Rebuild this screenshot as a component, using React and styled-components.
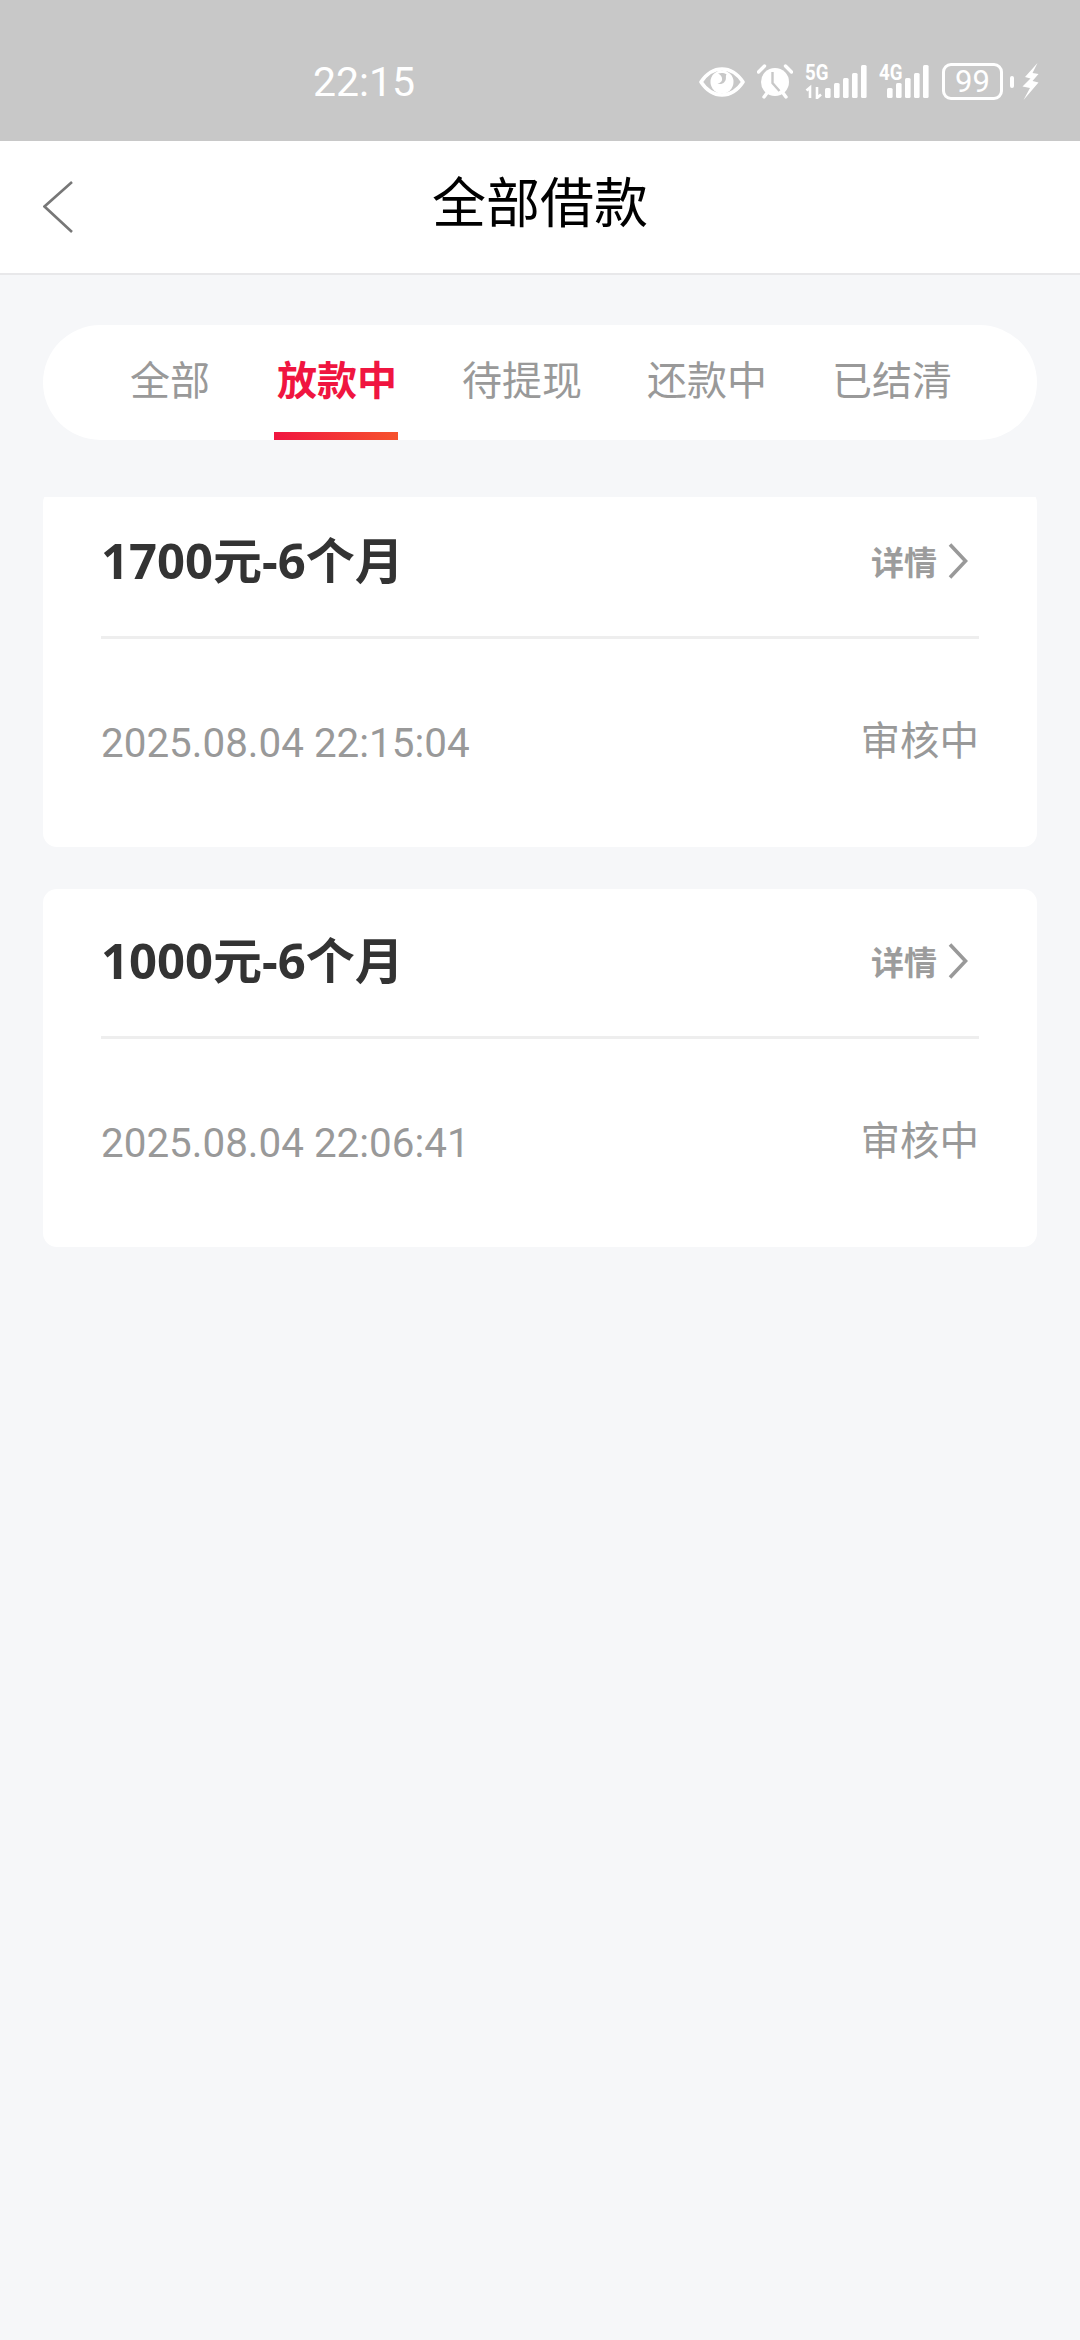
import React from 'react'
import styled, { createGlobalStyle } from 'styled-components'

const GlobalStyle = createGlobalStyle`
  html, body {
    margin: 0;
    padding: 0;
    background: #f6f7f9;
  }
  body {
    font-family: Roboto, "Noto Sans CJK SC", sans-serif;
  }
`

const tabs = ['全部', '放款中', '待提现', '还款中', '已结清']

const loans = [
  { title: '1700元-6个月', time: '2025.08.04 22:15:04', status: '审核中', scrolled: true },
  { title: '1000元-6个月', time: '2025.08.04 22:06:41', status: '审核中' },
]

const signalBars = [24, 19, 14, 9, 1]

function EyeIcon() {
  return (
    <svg width="46" height="30" viewBox="0 0 46 30">
      <path d="M2 15C8 6 15 2 23 2s15 4 21 13c-6 9-13 13-21 13S8 24 2 15z" fill="none" stroke="#fff" strokeWidth="3.6" strokeLinejoin="round" />
      <circle cx="23" cy="15" r="11.500" fill="#fff" />
      <path d="M19 6.500c3-1 6-.8 8.500.8-1.500 2.700.8 5-2.500 8.200-2 1.800-4.500 1.800-6.500.8 2.800-.2 4.800-1.600 4.600-4.300-.1-2.300-1.600-4.300-4.100-5.500z" fill="#c8c8c8" />
    </svg>
  )
}

function AlarmIcon() {
  return (
    <svg width="36" height="35" viewBox="0 0 36 35">
      <circle cx="18" cy="18" r="14" fill="#fff" />
      <path d="M1.500 8l6-6M34.500 8l-6-6M7 33l3-4M29 33l-3-4" stroke="#fff" strokeWidth="3.4" strokeLinecap="round" />
      <path d="M15.500 8v11l7 8" fill="none" stroke="#c8c8c8" strokeWidth="2.400" />
    </svg>
  )
}

function SignalIcon({ label, width, offset, arrows }) {
  return (
    <SignalWrap $width={width}>
      <SignalLabel>{label}</SignalLabel>
      <svg width={width} height="35" viewBox={`0 0 ${width} 35`}>
        {arrows && <path d="M5 34V23.500l-3.500 3M12 23v11l4-3.500" fill="none" stroke="#fff" strokeWidth="2.600" />}
        {signalBars.map((top, i) => (
          <rect key={i} x={offset + i * 9} y={top} width="5.600" height={34 - top} rx="1.500" fill="#fff" />
        ))}
      </svg>
    </SignalWrap>
  )
}

function BoltIcon() {
  return (
    <svg width="17" height="37" viewBox="0 0 17 37">
      <path d="M15.500 0L3 14l5.500 1.500L.5 23.500l7.500 1.500L1.500 37 16.500 19.500l-6-1.500 6-7-6-1z" fill="#fff" />
    </svg>
  )
}

function BackIcon() {
  return (
    <svg width="30" height="52" viewBox="0 0 30 52">
      <path d="M29 1L1.500 25.500 29 51" fill="none" stroke="#777" strokeWidth="2.600" />
    </svg>
  )
}

function RightIcon() {
  return (
    <svg width="20" height="36" viewBox="0 0 20 36">
      <path d="M2 1.500L17.500 18 2 34.500" fill="none" stroke="#999" strokeWidth="3.600" />
    </svg>
  )
}

export default function App() {
  return (
    <Page>
      <GlobalStyle />
      <StatusBar>
        <Clock>22:15</Clock>
        <StatusIcons>
          <EyeIcon />
          <AlarmIcon />
          <SignalIcon label="5G" width={62} offset={20} arrows />
          <SignalIcon label="4G" width={51} offset={8} />
          <Battery>99</Battery>
          <BatteryTip />
          <BoltIcon />
        </StatusIcons>
      </StatusBar>

      <NavBar>
        <BackButton><BackIcon /></BackButton>
        <NavTitle>全部借款</NavTitle>
      </NavBar>

      <TabSection>
        <TabPill>
          {tabs.map((tab) => (
            <Tab key={tab} $active={tab === '放款中'}>{tab}</Tab>
          ))}
        </TabPill>
      </TabSection>

      <LoanList>
        {loans.map((loan) => (
          <LoanCard key={loan.title} $scrolled={loan.scrolled}>
            <CardHead>
              <LoanTitle>{loan.title}</LoanTitle>
              <DetailLink>详情<RightIcon /></DetailLink>
            </CardHead>
            <CardBody>
              <LoanTime>{loan.time}</LoanTime>
              <LoanStatus>{loan.status}</LoanStatus>
            </CardBody>
          </LoanCard>
        ))}
      </LoanList>
    </Page>
  )
}

const Page = styled.div`
  width: 1080px;
  height: 2340px;
  overflow: hidden;
  background: #f6f7f9;
  display: flex;
  flex-direction: column;
`

const StatusBar = styled.div`
  height: 141px;
  flex: none;
  background: #c8c8c8;
  display: flex;
  align-items: center;
  padding: 22px 41px 0 313px;
  box-sizing: border-box;
  justify-content: space-between;
`

const Clock = styled.span`
  color: #fff;
  font-size: 41px;
  line-height: 48px;
`

const StatusIcons = styled.div`
  display: flex;
  align-items: center;
  gap: 12px;
`

const SignalWrap = styled.div`
  position: relative;
  width: ${(p) => p.$width}px;
  height: 35px;
`

const SignalLabel = styled.span`
  position: absolute;
  left: 0;
  top: -2px;
  color: #fff;
  font-size: 22px;
  line-height: 22px;
  font-weight: 700;
  white-space: nowrap;
  transform: scaleX(0.85);
  transform-origin: left center;
`

const Battery = styled.div`
  width: 61px;
  height: 37px;
  box-sizing: border-box;
  border: 3px solid #fff;
  border-radius: 9px;
  color: #fff;
  font-size: 31px;
  line-height: 31px;
  text-align: center;
`

const BatteryTip = styled.div`
  width: 4px;
  height: 12px;
  border-radius: 2px;
  background: #fff;
  margin: 0 -4px 0 -5px;
`

const NavBar = styled.div`
  height: 134px;
  flex: none;
  box-sizing: border-box;
  background: #fff;
  border-bottom: 2px solid #e8e8ea;
  display: grid;
  grid-template-columns: 1fr auto 1fr;
  align-items: center;
  padding: 0 43px;
`

const BackButton = styled.div`
  display: flex;
  align-items: center;
`

const NavTitle = styled.div`
  font-size: 54px;
  line-height: 64px;
  color: #000;
  padding-bottom: 5px;
`

const TabSection = styled.div`
  flex: none;
  padding: 50px 43px 57px;
`

const TabPill = styled.div`
  height: 115px;
  box-sizing: border-box;
  background: #fff;
  border-radius: 58px;
  display: flex;
  gap: 65px;
  padding-left: 87px;
`

const Tab = styled.div`
  position: relative;
  height: 115px;
  font-size: 40px;
  line-height: 113px;
  font-weight: ${(p) => (p.$active ? 700 : 400)};
  color: ${(p) => (p.$active ? '#f01540' : '#999')};

  &:first-child {
    margin-right: 2px;
  }

  &::after {
    content: '';
    display: ${(p) => (p.$active ? 'block' : 'none')};
    position: absolute;
    left: -3px;
    right: -1px;
    bottom: 0;
    height: 8px;
    background: linear-gradient(90deg, #f01540, #f6522c);
  }
`

const LoanList = styled.div`
  flex: 1;
  overflow: hidden;
  padding: 0 43px;
  display: flex;
  flex-direction: column;
  gap: 42px;
`

const LoanCard = styled.div`
  flex: none;
  background: #fff;
  border-radius: 14px;
  padding: 0 58px;
  margin-top: ${(p) => (p.$scrolled ? '-8px' : '0')};
`

const CardHead = styled.div`
  height: 150px;
  box-sizing: border-box;
  border-bottom: 3px solid #eeeeee;
  display: flex;
  align-items: center;
  justify-content: space-between;
`

const LoanTitle = styled.div`
  font-family: "Noto Sans", "Noto Sans CJK SC", sans-serif;
  font-size: 49px;
  line-height: 60px;
  font-weight: 700;
  color: #333;
  padding-bottom: 6px;
`

const DetailLink = styled.div`
  display: flex;
  align-items: center;
  gap: 11px;
  font-size: 33px;
  font-weight: 700;
  color: #9c9c9c;
  padding-right: 11px;
  padding-bottom: 3px;
`

const CardBody = styled.div`
  height: 208px;
  display: flex;
  align-items: center;
  justify-content: space-between;
`

const LoanTime = styled.div`
  font-size: 40.400px;
  color: #999;
`

const LoanStatus = styled.div`
  font-size: 39.500px;
  line-height: 48px;
  color: #999;
  padding-bottom: 2px;
`
